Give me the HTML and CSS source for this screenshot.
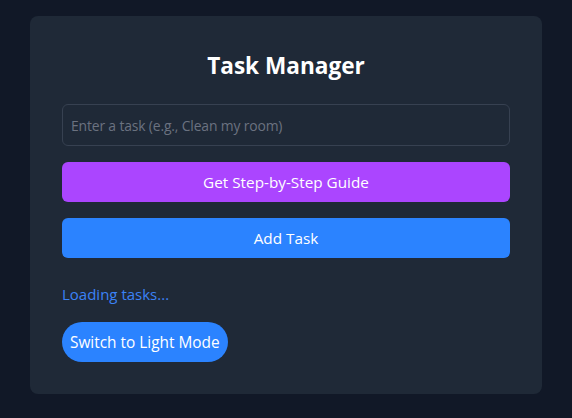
FILE: index.html
```html
<!DOCTYPE html>
<html lang="en">
<head>
<meta charset="utf-8">
<title>Task Manager</title>
<link rel="stylesheet" href="styles.css">
</head>
<body>
<main class="card">
  <h1 class="title">Task Manager</h1>
  <input class="task-input" type="text" placeholder="Enter a task (e.g., Clean my room)">
  <button class="btn btn-guide">Get Step-by-Step Guide</button>
  <button class="btn btn-add">Add Task</button>
  <p class="loading">Loading tasks...</p>
  <div class="toggle-row">
    <button class="toggle">Switch to Light Mode</button>
  </div>
</main>
</body>
</html>
```
FILE: styles.css
```css
* { box-sizing: border-box; }
html, body { margin: 0; padding: 0; }
body {
  background: #111827;
  font-family: "Open Sans", "Noto Sans", "Liberation Sans", sans-serif;
  color: #ffffff;
  padding: 16px 30px;
}
.card {
  max-width: 512px;
  margin: 0 auto;
  background: #1f2937;
  border-radius: 8px;
  padding: 32px;
  display: flex;
  flex-direction: column;
}
.title {
  margin: 0 0 20px;
  font-size: 22.6px;
  line-height: 36px;
  font-weight: 700;
  text-align: center;
}
.task-input {
  height: 42px;
  border: 1px solid #374151;
  border-radius: 6px;
  background: #1f2937;
  color: #ffffff;
  font: inherit;
  font-size: 14.5px;
  padding: 0 8px;
  margin-bottom: 16px;
}
.task-input::placeholder { color: #6b7280; font-size: 13.9px; letter-spacing: -0.15px; }
.btn {
  height: 40px;
  border: none;
  border-radius: 6px;
  color: #ffffff;
  font: inherit;
  font-size: 15.3px;
  margin-bottom: 16px;
}
.btn-guide { background: #ab45ff; }
.btn-add { background: #2b83ff; margin-bottom: 0; }
.loading {
  margin: 24px 0 16px;
  color: #3b82f6;
  font-size: 15px;
  line-height: 24px;
}
.toggle-row { display: flex; }
.toggle {
  height: 40px;
  border: none;
  border-radius: 20px;
  background: #2b83ff;
  color: #ffffff;
  font: inherit;
  font-size: 15.4px;
  padding: 0 8px;
}
```
